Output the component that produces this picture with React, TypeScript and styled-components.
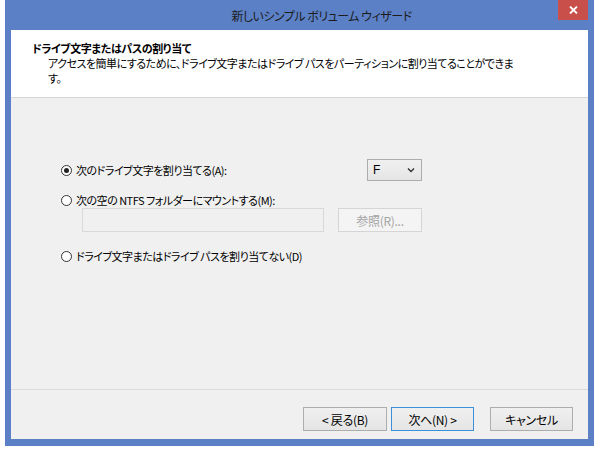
import React from "react";
import styled, { createGlobalStyle } from "styled-components";

const GlobalStyle = createGlobalStyle`
  body {
    margin: 0;
    background: #ffffff;
    font-family: "Noto Sans CJK JP", "Noto Sans", sans-serif;
    font-feature-settings: "palt";
  }
`;

const Window = styled.div`
  margin-left: 5px;
  width: 589px;
  height: 446px;
  box-sizing: border-box;
  background: #5b80c6;
  padding: 0 6px 7px 6px;
  display: flex;
  flex-direction: column;
`;

const TitleBar = styled.div`
  position: relative;
  height: 30px;
  display: flex;
  align-items: center;
  justify-content: center;
  padding-left: 44px;
  color: #1c1c1c;
  font-size: 12px;
  letter-spacing: -0.5px;
`;

const CloseButton = styled.div`
  position: absolute;
  top: 0;
  right: 0;
  width: 30px;
  height: 20px;
  background: #c84f4a;
  display: flex;
  align-items: center;
  justify-content: center;
`;

const Client = styled.div`
  flex: 1;
  display: flex;
  flex-direction: column;
  background: #f0f0f0;
  font-size: 11px;
  letter-spacing: -0.5px;
  color: #000;
`;

const Header = styled.div`
  height: 68px;
  box-sizing: border-box;
  background: #ffffff;
  border-bottom: 1px solid #d5d5d5;
  padding: 10px 0 0 21px;
`;

const HeaderTitle = styled.div`
  font-weight: bold;
  line-height: 16px;
  letter-spacing: -0.4px;
`;

const HeaderText = styled.div`
  line-height: 15px;
  padding-left: 16px;
`;

const Body = styled.div`
  flex: 1;
  padding: 61px 0 0 50px;
  display: flex;
  flex-direction: column;
`;

const OptionRow = styled.div<{ $top?: number; $height?: number }>`
  display: flex;
  align-items: center;
  width: 361px;
  height: ${(p) => p.$height ?? 16}px;
  margin-top: ${(p) => p.$top ?? 0}px;
`;

const Radio = styled.span<{ $checked?: boolean }>`
  width: 11px;
  height: 11px;
  box-sizing: border-box;
  border: 1px solid #333;
  border-radius: 50%;
  background: #fff;
  margin-right: 4px;
  display: flex;
  align-items: center;
  justify-content: center;
  flex-shrink: 0;
  &::after {
    content: "";
    display: ${(p) => (p.$checked ? "block" : "none")};
    width: 5px;
    height: 5px;
    border-radius: 50%;
    background: #222;
  }
`;

const Select = styled.div`
  margin-left: auto;
  width: 55px;
  height: 22px;
  box-sizing: border-box;
  border: 1px solid #acacac;
  background: linear-gradient(#f0f0f0, #e5e5e5);
  display: flex;
  align-items: center;
  justify-content: space-between;
  padding: 0 6px 0 5px;
  font-family: "Liberation Sans", sans-serif;
  font-size: 12px;
  letter-spacing: 0;
`;

const PathRow = styled.div`
  display: flex;
  align-items: center;
  margin-left: 21px;
  width: 340px;
  justify-content: space-between;
`;

const PathInput = styled.div`
  width: 242px;
  height: 24px;
  box-sizing: border-box;
  border: 1px solid #d9d9d9;
  background: #f0f0f0;
`;

const Button = styled.div<{ $width?: number; $disabled?: boolean; $default?: boolean }>`
  width: ${(p) => p.$width ?? 83}px;
  height: 24px;
  box-sizing: border-box;
  border: 1px solid
    ${(p) => (p.$disabled ? "#d5d5d5" : p.$default ? "#3c8fdb" : "#adadad")};
  background: ${(p) => (p.$disabled ? "#f4f4f4" : "linear-gradient(#f0f0f0, #e5e5e5)")};
  color: ${(p) => (p.$disabled ? "#a3a3a3" : "#000")};
  display: flex;
  align-items: center;
  justify-content: center;
  font-size: 12px;
  letter-spacing: -0.3px;
`;

const Footer = styled.div`
  height: 50px;
  box-sizing: border-box;
  border-top: 1px solid #dadada;
  display: flex;
  justify-content: flex-end;
  align-items: flex-start;
  padding: 17px 15px 0 0;
  gap: 4px;
`;

const Spacer = styled.div`
  width: 8px;
`;

export default function App() {
  return (
    <>
      <GlobalStyle />
      <Window>
        <TitleBar>
          新しいシンプル ボリューム ウィザード
          <CloseButton>
            <svg width="9" height="8" viewBox="0 0 9 8">
              <path d="M1 0.5 L8 7.5 M8 0.5 L1 7.5" stroke="#fff" strokeWidth="1.8" />
            </svg>
          </CloseButton>
        </TitleBar>
        <Client>
          <Header>
            <HeaderTitle>ドライブ文字またはパスの割り当て</HeaderTitle>
            <HeaderText>
              アクセスを簡単にするために、ドライブ文字またはドライブ パスをパーティションに割り当てることができま
              <br />
              す。
            </HeaderText>
          </Header>
          <Body>
            <OptionRow $height={22}>
              <Radio $checked />
              次のドライブ文字を割り当てる(A):
              <Select>
                F
                <svg width="8" height="6" viewBox="0 0 8 6">
                  <path d="M1 1.5 L4 4.5 L7 1.5" stroke="#333" strokeWidth="1.4" fill="none" />
                </svg>
              </Select>
            </OptionRow>
            <OptionRow $top={11}>
              <Radio />
              次の空の NTFS フォルダーにマウントする(M):
            </OptionRow>
            <PathRow>
              <PathInput />
              <Button $disabled $width={84}>
                参照(R)...
              </Button>
            </PathRow>
            <OptionRow $top={16}>
              <Radio />
              ドライブ文字またはドライブ パスを割り当てない(D)
            </OptionRow>
          </Body>
          <Footer>
            <Button $width={84}>&lt; 戻る(B)</Button>
            <Button $default>次へ(N) &gt;</Button>
            <Spacer />
            <Button>キャンセル</Button>
          </Footer>
        </Client>
      </Window>
    </>
  );
}
